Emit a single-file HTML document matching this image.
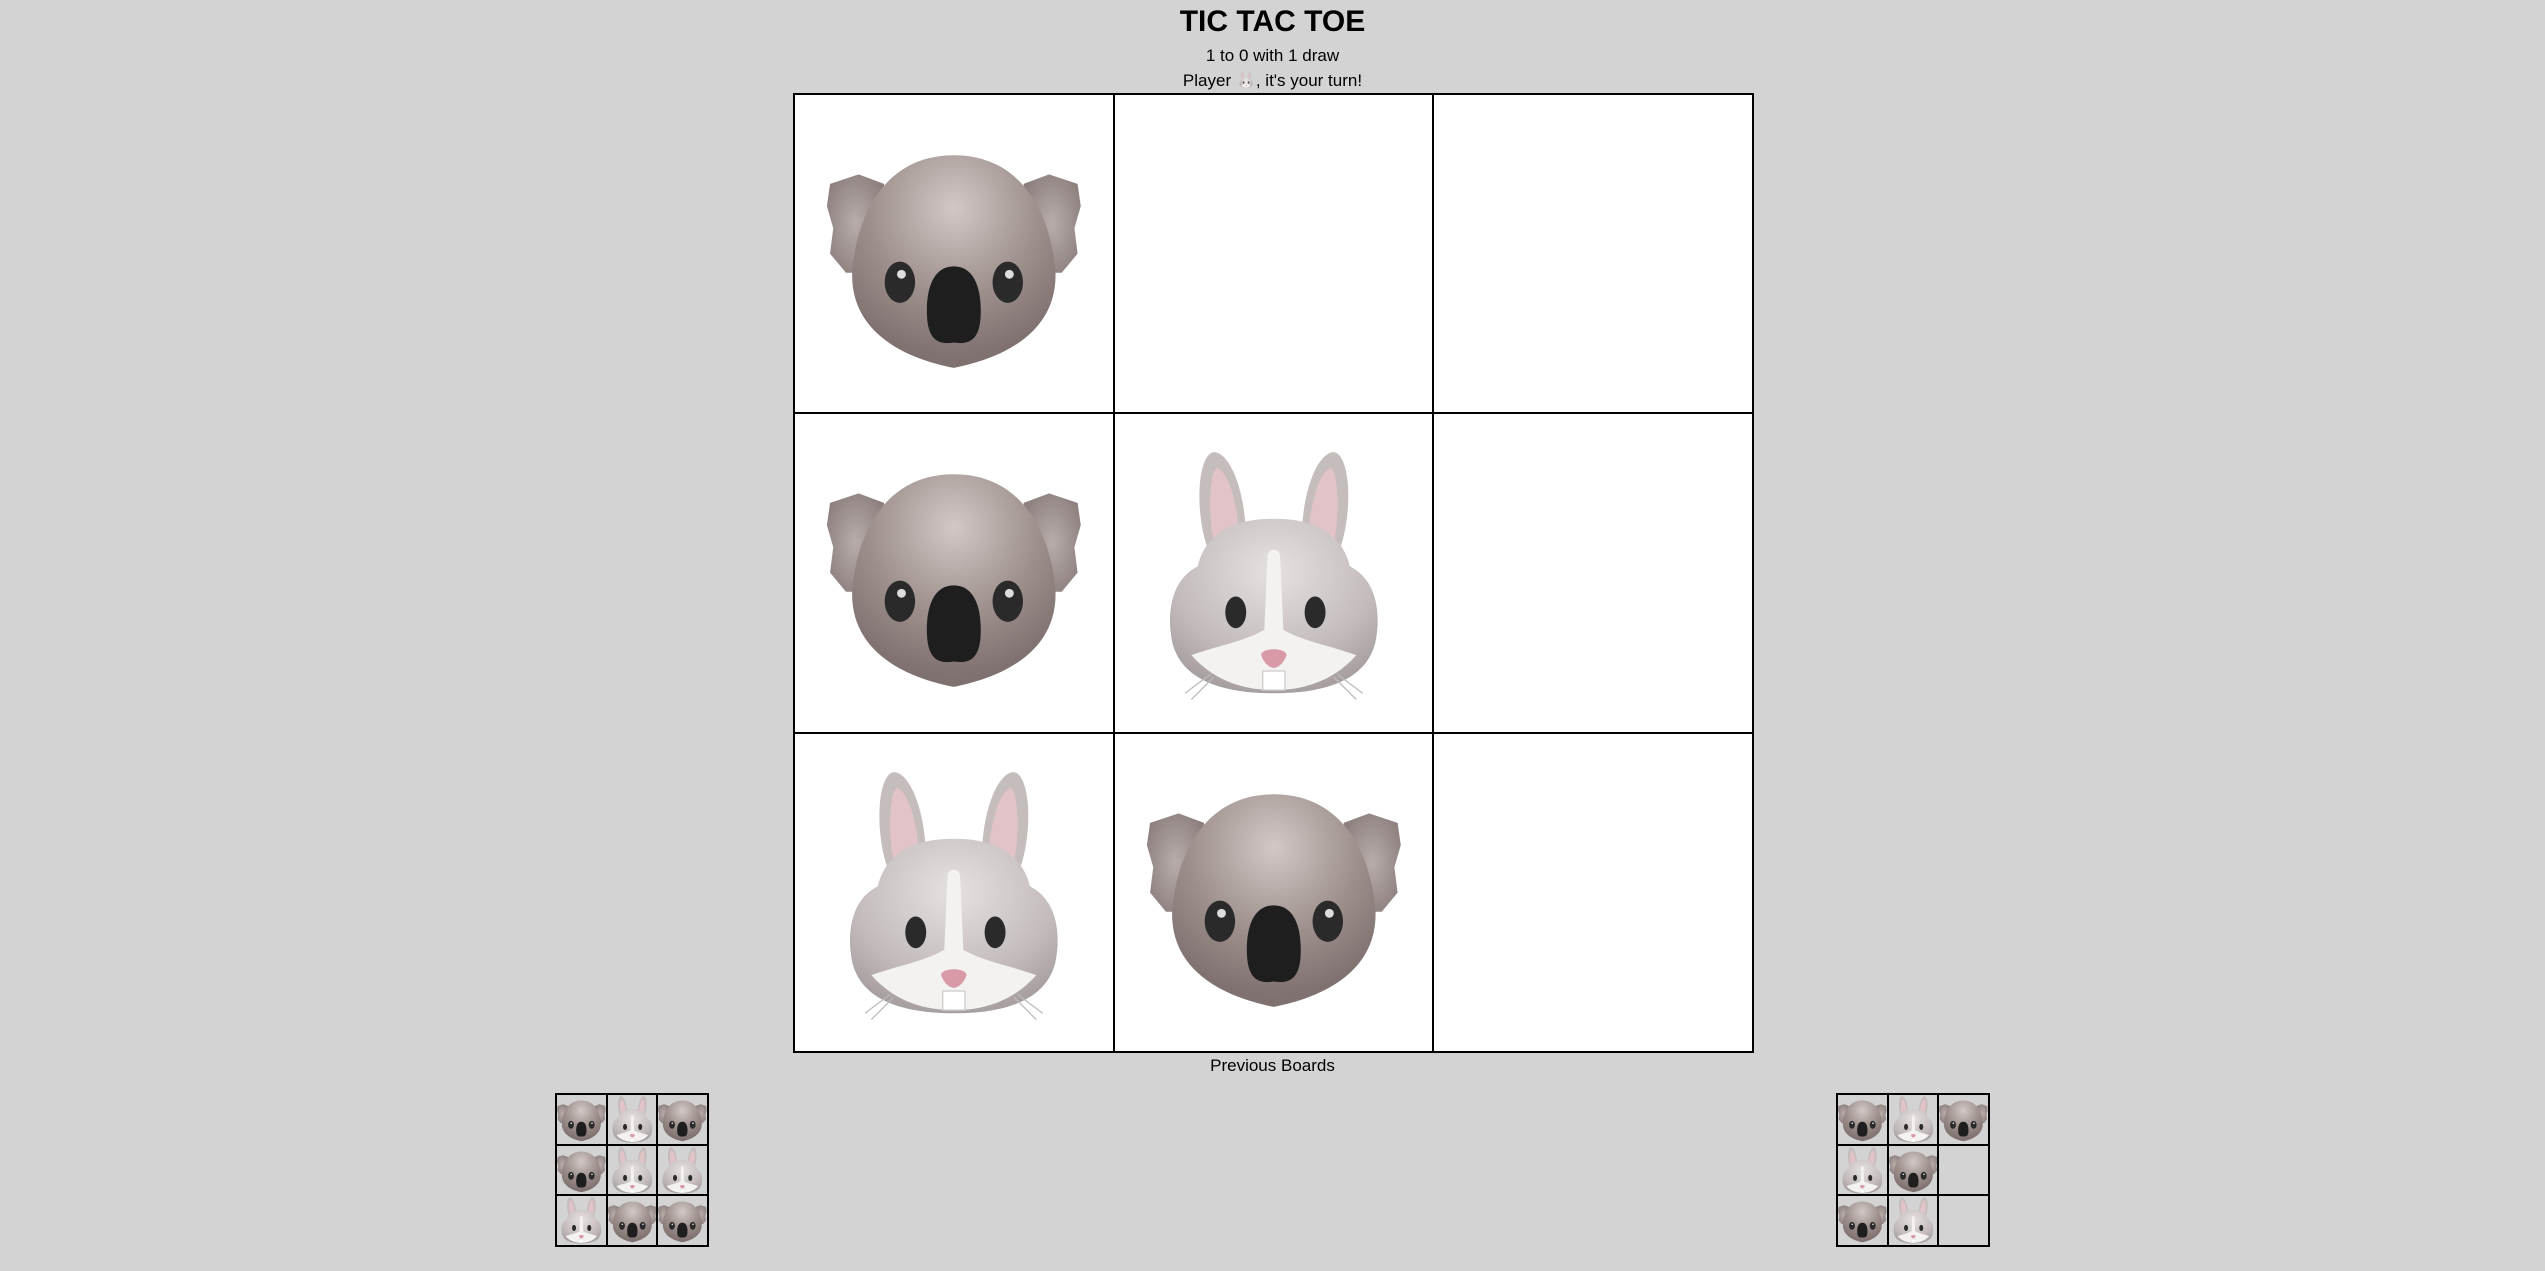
<!DOCTYPE html>
<html><head><meta charset="utf-8"><style>
html,body{margin:0;padding:0;background:#d3d3d3;width:2545px;height:1271px;overflow:hidden;font-family:"Liberation Sans",sans-serif;position:relative}
.t{position:absolute;left:0;width:2545px;text-align:center;color:#000;white-space:nowrap}
.board{position:absolute;display:grid;border:1px solid #000;box-sizing:border-box}
.big{left:793px;top:93px;width:961px;height:960px;grid-template-columns:repeat(3,1fr);grid-template-rows:repeat(3,1fr);background:#fff}
.big>div{border:1px solid #000;background:#fff;position:relative}
.big svg{position:absolute;left:0;top:0;width:100%;height:100%}
.sm{top:1093px;width:154px;height:154px;grid-template-columns:repeat(3,1fr);grid-template-rows:repeat(3,1fr);border:1px solid #000}
.sm>div{border:1.5px solid #000;position:relative}
.sm svg{position:absolute;left:0;top:0;width:100%;height:100%}
</style></head><body>
<svg width="0" height="0" style="position:absolute">
<defs>
<radialGradient id="kg" cx="50%" cy="25%" r="70%"><stop offset="0" stop-color="#d2c8c5"/><stop offset=".6" stop-color="#9c8f8c"/><stop offset="1" stop-color="#7f716f"/></radialGradient>
<radialGradient id="ke" cx="50%" cy="50%" r="60%"><stop offset="0" stop-color="#b8adab"/><stop offset="1" stop-color="#8b7e7c"/></radialGradient>
<radialGradient id="rg" cx="50%" cy="30%" r="70%"><stop offset="0" stop-color="#e6e1e1"/><stop offset=".7" stop-color="#c3bbbb"/><stop offset="1" stop-color="#a8a0a0"/></radialGradient>
<symbol id="koala" viewBox="0 0 100 100">
<path d="M11,28 L20,25 L28,28 L28,56 L16,56 L11,50 L12,42 L10,35Z" fill="url(#ke)"/>
<path d="M89,28 L80,25 L72,28 L72,56 L84,56 L89,50 L88,42 L90,35Z" fill="url(#ke)"/>
<path d="M50,19 C70,19 80,35 82,55 C83,72 70,82 50,86 C30,82 17,72 18,55 C20,35 30,19 50,19Z" fill="url(#kg)"/>
<ellipse cx="33" cy="59" rx="4.8" ry="6.5" fill="#2a2a2a"/>
<ellipse cx="67" cy="59" rx="4.8" ry="6.5" fill="#2a2a2a"/>
<circle cx="33.5" cy="56.5" r="1.4" fill="#ddd"/><circle cx="67.5" cy="56.5" r="1.4" fill="#ddd"/>
<path d="M50,54 C56,54 58.5,60 58.5,68 C58.5,76 56,79 50,78 C44,79 41.5,76 41.5,68 C41.5,60 44,54 50,54Z" fill="#1e1e1e"/>
</symbol>
<symbol id="rabbit" viewBox="0 0 100 100">
<path d="M29,42 C25,30 26,13 31,12 C37,12 42,28 41,42Z" fill="#c5bcbc"/>
<path d="M31,40 C29,30 30,18 32,17 C36,18 39,30 39,40Z" fill="#e2c3c8"/>
<path d="M71,42 C75,30 74,13 69,12 C63,12 58,28 59,42Z" fill="#c5bcbc"/>
<path d="M69,40 C71,30 70,18 68,17 C64,18 61,30 61,40Z" fill="#e2c3c8"/>
<path d="M50,33 C66,33 72,40 74,48 C82,52 84,62 82,72 C79,84 66,88 50,88 C34,88 21,84 18,72 C16,62 18,52 26,48 C28,40 34,33 50,33Z" fill="url(#rg)"/>
<path d="M48,45 C48,42 52,42 52,45 L53,68 C60,72 68,73 76,76 C68,85 58,87 50,87 C42,87 32,85 24,76 C32,73 40,72 47,68Z" fill="#f4f1f1"/>
<ellipse cx="38" cy="62.5" rx="3.3" ry="5" fill="#2a2a2a"/>
<ellipse cx="63" cy="62.5" rx="3.3" ry="5" fill="#2a2a2a"/>
<path d="M46,76 C46,73.5 54,73.5 54,76 C53,79 51,80 50,80 C49,80 47,79 46,76Z" fill="#d99aa8"/>
<rect x="46.5" y="81" width="7" height="6" fill="#fff" stroke="#ccc" stroke-width=".4"/>
<g stroke="#bbb" stroke-width=".4" fill="none"><path d="M30,82 L22,88 M31,83 L24,90 M70,82 L78,88 M69,83 L76,90"/></g>
</symbol>
</defs></svg>

<div class="t" style="top:5px;font-size:30px;font-weight:bold">TIC TAC TOE</div>
<div class="t" style="top:46px;font-size:17px">1 to 0 with 1 draw</div>
<div class="t" style="top:70px;font-size:17px">Player <svg width="20" height="20" style="vertical-align:-4px"><use href="#rabbit"/></svg>, it's your turn!</div>

<div class="board big">
<div><svg><use href="#koala"/></svg></div><div></div><div></div>
<div><svg><use href="#koala"/></svg></div><div><svg><use href="#rabbit"/></svg></div><div></div>
<div><svg><use href="#rabbit"/></svg></div><div><svg><use href="#koala"/></svg></div><div></div>
</div>

<div class="t" style="top:1056px;font-size:17px">Previous Boards</div>

<div class="board sm" style="left:555px">
<div><svg viewBox="10 10 80 80"><use href="#koala" width="100" height="100"/></svg></div>
<div><svg viewBox="10 10 80 80"><use href="#rabbit" width="100" height="100"/></svg></div>
<div><svg viewBox="10 10 80 80"><use href="#koala" width="100" height="100"/></svg></div>
<div><svg viewBox="10 10 80 80"><use href="#koala" width="100" height="100"/></svg></div>
<div><svg viewBox="10 10 80 80"><use href="#rabbit" width="100" height="100"/></svg></div>
<div><svg viewBox="10 10 80 80"><use href="#rabbit" width="100" height="100"/></svg></div>
<div><svg viewBox="10 10 80 80"><use href="#rabbit" width="100" height="100"/></svg></div>
<div><svg viewBox="10 10 80 80"><use href="#koala" width="100" height="100"/></svg></div>
<div><svg viewBox="10 10 80 80"><use href="#koala" width="100" height="100"/></svg></div>
</div>

<div class="board sm" style="left:1836px">
<div><svg viewBox="10 10 80 80"><use href="#koala" width="100" height="100"/></svg></div>
<div><svg viewBox="10 10 80 80"><use href="#rabbit" width="100" height="100"/></svg></div>
<div><svg viewBox="10 10 80 80"><use href="#koala" width="100" height="100"/></svg></div>
<div><svg viewBox="10 10 80 80"><use href="#rabbit" width="100" height="100"/></svg></div>
<div><svg viewBox="10 10 80 80"><use href="#koala" width="100" height="100"/></svg></div>
<div></div>
<div><svg viewBox="10 10 80 80"><use href="#koala" width="100" height="100"/></svg></div>
<div><svg viewBox="10 10 80 80"><use href="#rabbit" width="100" height="100"/></svg></div>
<div></div>
</div>
</body></html>
